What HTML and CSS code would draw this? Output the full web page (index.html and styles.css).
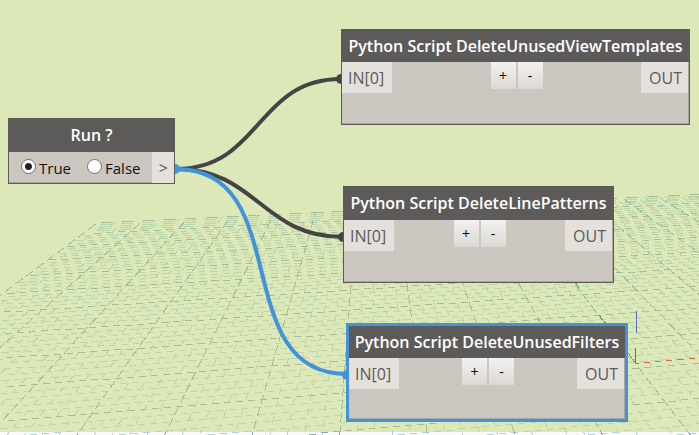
FILE: index.html
```
<!DOCTYPE html>
<html lang="en">
<head>
<meta charset="utf-8">
<title>Graph workspace</title>
<link rel="stylesheet" href="styles.css">
</head>
<body>
<main class="workspace">
  <svg class="layer" aria-hidden="true">
    <defs>
      <clipPath id="ground"><rect width="100%" height="432"/></clipPath>
      <clipPath id="edge"><rect y="432" width="100%" height="100%"/></clipPath>
    </defs>
    <g clip-path="url(#ground)"><g id="grid"></g></g>
    <rect class="edge-fill" y="432" width="100%" height="100%"/>
    <g clip-path="url(#edge)"><use class="edge-grid" href="#grid"/></g>
    <path class="axis axis-z" d="M636.5 311V333M635.5 348V363"/>
    <path class="axis axis-y" d="M575 282L580 289M599 315L607 325M628 353L635 362"/>
    <path class="axis axis-x" d="M635 363.5h4M644 362.5h6M655 361.5h6M666 360.5h6M677 359.5h7M689 358.5h6"/>
  </svg>
  <svg class="layer wires" aria-hidden="true">
    <path d="M176 169C261 169 256 79 341 79"/>
    <path d="M176 169C257 169 262 237 343 237"/>
    <circle cx="341" cy="79" r="5"/>
    <circle cx="343" cy="237" r="5"/>
    <g class="active">
      <path d="M176 169C296 169 227 374 347 374"/>
      <circle cx="175" cy="169" r="5"/>
      <circle cx="347" cy="375" r="5"/>
    </g>
  </svg>

  <section class="node run">
    <h2>Run ?</h2>
    <div class="body">
      <div class="choices">
        <label><input type="radio" name="run" checked>True</label>
        <label><input type="radio" name="run">False</label>
      </div>
      <span class="port arrow">&gt;</span>
    </div>
  </section>

  <section class="node script templates">
    <h2>Python Script DeleteUnusedViewTemplates</h2>
    <div class="body">
      <span class="port in">IN[0]</span>
      <div class="buttons"><button type="button">+</button><button type="button">-</button></div>
      <span class="port out">OUT</span>
    </div>
  </section>

  <section class="node script patterns">
    <h2>Python Script DeleteLinePatterns</h2>
    <div class="body">
      <span class="port in">IN[0]</span>
      <div class="buttons"><button type="button">+</button><button type="button">-</button></div>
      <span class="port out">OUT</span>
    </div>
  </section>

  <section class="node script filters selected">
    <h2>Python Script DeleteUnusedFilters</h2>
    <div class="body">
      <span class="port in">IN[0]</span>
      <div class="buttons"><button type="button">+</button><button type="button">-</button></div>
      <span class="port out">OUT</span>
    </div>
  </section>
</main>
<script src="script.js"></script>
</body>
</html>
```
FILE: styles.css
```
* { box-sizing: border-box; }
body { margin: 0; font: 16px/22px "Open Sans", "Noto Sans", sans-serif; }
.workspace {
  position: relative;
  height: 100vh;
  overflow: hidden;
  background: #dce8b8;
  --minor: #bbd5ad;
  --major: #a5bc95;
}
.layer { position: absolute; inset: 0; width: 100%; height: 100%; }
#grid path { fill: none; stroke: var(--minor); shape-rendering: crispEdges; }
#grid path.major { stroke: var(--major); }
.edge-fill { fill: #fafafa; }
.edge-grid { --minor: #b3d1e2; --major: #8aa5b8; }
.axis { fill: none; shape-rendering: crispEdges; }
.axis-x { stroke: #e8693c; }
.axis-y { stroke: #56a531; stroke-dasharray: 3 1; }
.axis-z { stroke: #5f68ba; }
.wires path { fill: none; stroke: #444444; stroke-width: 4; }
.wires circle { fill: #444444; }
.wires .active path { stroke: #4293da; }
.wires .active circle { fill: #4293da; }

.node {
  position: absolute;
  border: 1px solid #5d5b59;
  background: #cbc6bf;
  box-shadow: inset -1px -1px #aaa5a0;
}
.node h2 {
  margin: 0;
  padding: 5px 0;
  background: #5d5b59;
  color: #fff;
  font-size: 16px;
  font-weight: 650;
  line-height: 22px;
  text-align: center;
  white-space: nowrap;
}
.body { display: flex; justify-content: space-between; align-items: flex-start; }
.script .body { height: 62px; }
.port {
  padding: 5px 6px 4px;
  background: #e4e1dc;
  color: #5d5b59;
}
.in { padding-right: 8px; }
.out { padding-left: 8px; margin-right: 1px; }
.buttons { display: flex; gap: 2px; }
button {
  width: 25px;
  height: 27px;
  padding: 0;
  border: 0;
  background: linear-gradient(#f3f2f1, #dbd8d4);
  color: #000;
  font: 14px/27px "Open Sans", "Noto Sans", sans-serif;
}
.run { left: 8px; top: 118px; width: 167px; }
.run h2, .patterns h2 { padding-bottom: 6px; }
.arrow { padding-left: 7px; }
.choices { display: flex; gap: 16px; padding: 5px 0 4px 12px; }
label { display: flex; gap: 3px; color: #111; font-size: 15px; }
input {
  appearance: none;
  width: 15px;
  height: 15px;
  margin: 2px 0;
  border: 1px solid #707070;
  border-radius: 50%;
  background: #fff;
}
input:checked { background: radial-gradient(circle, #212121 3px, #fff 4px); }
.templates { left: 341px; top: 29px; width: 349px; }
.patterns { left: 343px; top: 186px; width: 271px; }
.filters { left: 346px; top: 323px; width: 282px; }
.selected { border: 3px solid #4293da; }
.selected .body { height: 61px; }
```
FILE: script.js
```
// Ground grid in perspective: rows and columns run to separate vanishing points.
const grid = document.getElementById("grid");
const rowEnd = { x: 5335, y: -27 };
const columnEnd = { x: 371, y: 18 };

function rowAt(n, x) {
  const y0 = 18 + 1 / (0.00248 + 0.00023 * n);
  return y0 + (rowEnd.y - y0) * x / rowEnd.x;
}

function columnAt(k, y) {
  const base = 340 + 87 * k;
  return columnEnd.x + (base - columnEnd.x) * (y - columnEnd.y) / (432 - columnEnd.y);
}

function addPath(d, major, dash, offset) {
  const path = document.createElementNS("http://www.w3.org/2000/svg", "path");
  path.setAttribute("d", d);
  path.setAttribute("stroke-dasharray", dash);
  path.setAttribute("stroke-dashoffset", offset);
  if (major) path.setAttribute("class", "major");
  grid.appendChild(path);
}

function drawRow(i) {
  const n = i / 5;
  let x = 0;
  while (x < 300 && columnAt(-6, rowAt(n, x)) > x) x += 1;
  let d = "";
  const far = n > 9;
  const dash = far ? 12 : 7;
  const period = far ? 21 : 12;
  const shift = far ? (50 - i) * 2 + 3 : ((i + 20) * 7) % period;
  for (x += shift; x < 1000; x += period) {
    const y = Math.floor(rowAt(n, x));
    d += `M${x} ${y}.5h${dash}`;
  }
  addPath(d, i % 5 === 0, "none", 0);
}

function drawColumn(i) {
  const k = i / 5;
  let top = 190;
  while (top < 240 && rowAt(10, columnAt(k, top)) > top) top += 1;
  const major = i % 5 === 0;
  addPath(`M${columnAt(k, top)} ${top}L${columnAt(k, 440)} 440`, major, major ? "9 4" : "7 8", (i + 40) * 5);
}

for (let i = -15; i <= 50; i += 1) drawRow(i);
for (let i = -30; i <= 60; i += 1) if (i % 5 !== 0) drawColumn(i);
for (let i = -30; i <= 60; i += 5) drawColumn(i);
```
